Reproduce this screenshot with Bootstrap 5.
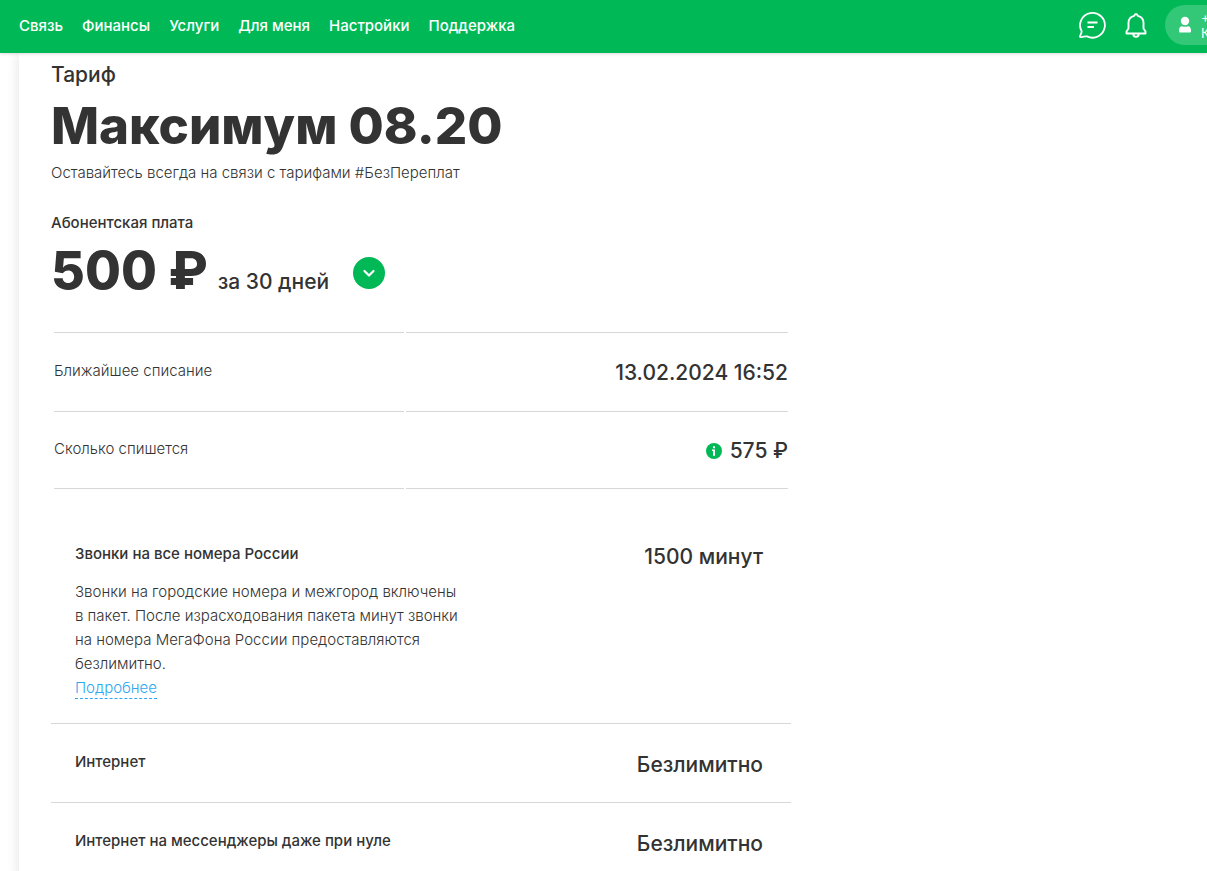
<!DOCTYPE html>
<html lang="ru">
<head>
<meta charset="utf-8">
<meta name="viewport" content="width=device-width, initial-scale=1">
<title>Тариф Максимум 08.20</title>
<link href="https://cdn.jsdelivr.net/npm/bootstrap@5.3.0/dist/css/bootstrap.min.css" rel="stylesheet">
<style>
  :root { --brand: #00b956; --ink: #333; --rule: #d8d8d8; }
  body { font-family: Inter, "Liberation Sans", sans-serif; font-size: 15px; line-height: 24px; font-weight: 300; color: var(--ink); background: #fff; }
  .topbar { height: 53px; background: var(--brand); box-shadow: 0 1px 3px rgba(0,0,0,.15); overflow: hidden; z-index: 2; padding: 0 0 3px 19px; }
  .topbar .nav { gap: 19px; padding-top: 2px; }
  .topbar .nav-link { padding: 0; color: #fff; font-size: 15px; font-weight: 500; white-space: nowrap; }
  .tools { gap: 17px; }
  .icon-btn { padding: 0; border: 0; background: none; color: #fff; line-height: 1; }
  .user-pill { height: 40px; width: 64px; margin-right: -22px; padding: 0 0 0 12px; border: 0; border-radius: 20px; background: #33c778; color: #fff; font-size: 13px; line-height: 16px; gap: 8px; }
  .sheet { margin-left: 19px; padding: 10px 32px 0; box-shadow: 0 0 12px rgba(0,0,0,.12); min-height: calc(100vh - 53px); background: #fff; }
  .tariff { max-width: 740px; }
  .text-mid { font-size: 21px; line-height: 24px; font-weight: 500; }
  .tariff-name, .price { font-size: 52px; line-height: 56px; font-weight: 800; }
  .tariff-name { font-size: 51px; margin: 11px 0 7px; }
  .period { margin-left: 10px; }
  .toggle { width: 32px; height: 32px; padding: 0; border: 0; border-radius: 50%; background: var(--brand); color: #fff; }
  .charges { border-collapse: separate; border-spacing: 2px 0; width: calc(100% - 2px); margin: 33px 1px 0; }
  .charges th, .charges td { border-top: 1px solid var(--rule); height: 79px; padding: 0 0 2px; font-weight: 300; }
  .charges td { padding: 2px 0 0; text-align: right; }
  .charges tr:last-child > * { height: 78px; border-bottom: 1px solid var(--rule); }
  .charges th { width: 350px; }
  .charges .text-mid { font-weight: 500; }
  .options { padding-top: 27px; }
  .option { padding: 26px 24px 23px; min-height: 79px; }
  .option + .option { border-top: 1px solid var(--rule); }
  .option .text-mid { margin: 3px 4px 0 0; }
  .option-title { font-size: 15px; line-height: 24px; font-weight: 500; margin: 0; }
  .option-title.fee { margin-top: 26px; }
  .option-text { max-width: 400px; }
  .option-text p { margin: 14px 0 0; }
  .more { color: #2ea7f2; text-decoration: none; border-bottom: 1px dashed #2ea7f2; padding-bottom: 1px; }
</style>
</head>
<body>
<header class="topbar d-flex align-items-center position-relative">
  <nav class="nav flex-nowrap" aria-label="Основное меню">
    <a class="nav-link" href="#">Связь</a>
    <a class="nav-link" href="#">Финансы</a>
    <a class="nav-link" href="#">Услуги</a>
    <a class="nav-link" href="#">Для меня</a>
    <a class="nav-link" href="#">Настройки</a>
    <a class="nav-link" href="#">Поддержка</a>
  </nav>
  <div class="tools d-flex align-items-center ms-auto">
    <button type="button" class="icon-btn" aria-label="Чат">
      <svg width="30" height="30" viewBox="0 0 30 30" fill="none" stroke="currentColor" stroke-width="1.8" stroke-linejoin="round"><path d="M4.7 21.4A12.4 12.4 0 1 1 10 26.4C7.500 26 5.500 27.700 3 26.900C2.300 26.300 4.600 23.800 4.700 21.400Z"/><path d="M10.500 12.500H20.500M10.500 17H17"/></svg>
    </button>
    <button type="button" class="icon-btn" aria-label="Уведомления">
      <svg width="24" height="28" viewBox="0 0 24 28" fill="none" stroke="currentColor" stroke-width="1.900" stroke-linejoin="round"><path d="M2.500 22.500V20.500L4.500 17.500V11.500A7 7 0 0 1 9.500 5.200C10.500 4.900 10.700 3 12 3S13.500 4.900 14.500 5.200A7 7 0 0 1 19.500 11.500V17.500L21.500 20.500V22.500Z"/><path d="M9.200 22.500A2.800 3.400 0 0 0 14.800 22.500"/></svg>
    </button>
    <button type="button" class="user-pill d-flex align-items-center flex-shrink-0" aria-label="Профиль">
      <svg class="flex-shrink-0" width="16" height="18" viewBox="0 0 16 18" fill="currentColor"><circle cx="8" cy="5" r="4.200"/><path d="M2 14C2 11.500 3.500 10.200 5 10.200Q8 11.500 11 10.200C12.500 10.200 14 11.500 14 14V15.500Q14 16.500 13 16.500H3Q2 16.500 2 15.500Z"/></svg>
      <span class="text-start">+<br>К</span>
    </button>
  </div>
</header>
<main class="sheet">
  <div class="tariff">
    <div class="text-mid">Тариф</div>
    <h1 class="tariff-name">Максимум 08.20</h1>
    <p class="mb-0">Оставайтесь всегда на связи с тарифами #БезПереплат</p>
    <div class="option-title fee">Абонентская плата</div>
    <div class="d-flex align-items-center mt-2">
      <div class="d-flex align-items-baseline">
        <span class="price">500 ₽</span>
        <span class="text-mid period">за 30 дней</span>
      </div>
      <button type="button" class="toggle d-flex align-items-center justify-content-center ms-4 mt-1" aria-label="Показать детали">
        <svg width="16" height="16" viewBox="0 0 16 16" fill="none" stroke="currentColor" stroke-width="2.200" stroke-linecap="round" stroke-linejoin="round"><path d="M3.500 6 8 10.500 12.500 6"/></svg>
      </button>
    </div>
    <table class="charges">
      <tbody>
        <tr><th scope="row">Ближайшее списание</th><td class="text-mid">13.02.2024 16:52</td></tr>
        <tr><th scope="row">Сколько спишется</th><td><span class="d-flex align-items-center justify-content-end text-mid"><svg class="me-2" width="16" height="16" viewBox="0 0 16 16" aria-label="Информация"><circle cx="8" cy="8" r="8" fill="#00b956"/><path fill="#fff" d="M7 3.200H9V5.200H7ZM6 6.500H9V12.800H7V8H6Z"/></svg>575 ₽</span></td></tr>
      </tbody>
    </table>
    <section class="options">
      <div class="option d-flex justify-content-between">
        <div class="option-text">
          <h2 class="option-title">Звонки на все номера России</h2>
          <p>Звонки на городские номера и межгород включены<br>в пакет. После израсходования пакета минут звонки<br>на номера МегаФона России предоставляются<br>безлимитно.</p>
          <a class="more" href="#">Подробнее</a>
        </div>
        <div class="text-mid">1500 минут</div>
      </div>
      <div class="option d-flex justify-content-between">
        <h2 class="option-title">Интернет</h2>
        <div class="text-mid">Безлимитно</div>
      </div>
      <div class="option d-flex justify-content-between">
        <h2 class="option-title">Интернет на мессенджеры даже при нуле</h2>
        <div class="text-mid">Безлимитно</div>
      </div>
    </section>
  </div>
</main>
<script src="https://cdn.jsdelivr.net/npm/bootstrap@5.3.0/dist/js/bootstrap.bundle.min.js"></script>
</body>
</html>
